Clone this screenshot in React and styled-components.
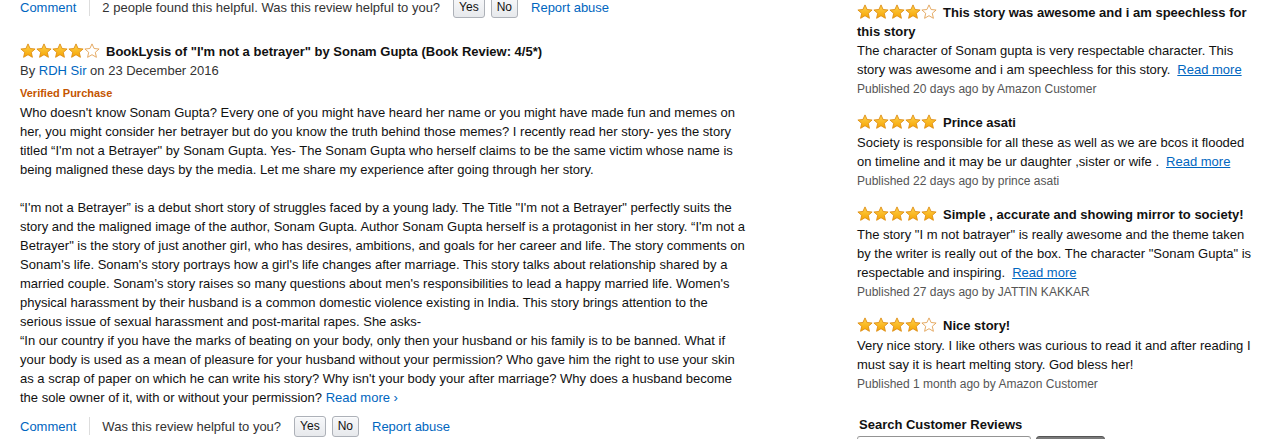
import React from "react";
import styled, { createGlobalStyle } from "styled-components";

const GlobalStyle = createGlobalStyle`
  body {
    margin: 0;
    background: #fff;
    font-family: "Liberation Sans", Arial, sans-serif;
    color: #111;
    font-size: 13px;
    line-height: 19px;
    overflow: hidden;
  }
`;

const STAR = "M8 0.9 L10.1 5.5 L15.1 6 L11.3 9.3 L12.4 14.3 L8 11.7 L3.6 14.3 L4.7 9.3 L0.9 6 L5.9 5.5 Z";

const Star = ({ filled, id }) => (
  <svg width="16" height="16" viewBox="0 0 16 16">
    <defs>
      <linearGradient id={id} x1="0" y1="0" x2="0" y2="1">
        <stop offset="0" stopColor="#ffd34f" />
        <stop offset="1" stopColor="#f5a300" />
      </linearGradient>
    </defs>
    <path
      d={STAR}
      fill={filled ? `url(#${id})` : "#fff"}
      stroke={filled ? "#de8d14" : "#e2a155"}
      strokeWidth="0.9"
      strokeLinejoin="round"
    />
  </svg>
);

let starSeq = 0;
const Stars = ({ count }) => {
  const base = `g${starSeq++}`;
  return (
    <StarBox>
      {[0, 1, 2, 3, 4].map((i) => (
        <Star key={i} filled={i < count} id={`${base}-${i}`} />
      ))}
    </StarBox>
  );
};

const ActionRow = ({ found, top }) => (
  <Actions $top={top}>
    <Link>Comment</Link>
    <Divider />
    <Muted>{found}Was this review helpful to you?</Muted>
    <VoteButton>Yes</VoteButton>
    <VoteButton>No</VoteButton>
    <Link $gap>Report abuse</Link>
  </Actions>
);

const sideReviews = [
  {
    stars: 4,
    title: "This story was awesome and i am speechless for this story",
    body: "The character of Sonam gupta is very respectable character. This story was awesome and i am speechless for this story.",
    more: true,
    by: "Published 20 days ago by Amazon Customer",
  },
  {
    stars: 5,
    title: "Prince asati",
    body: "Society is responsible for all these as well as we are bcos it flooded on timeline and it may be ur daughter ,sister or wife .",
    more: true,
    by: "Published 22 days ago by prince asati",
  },
  {
    stars: 5,
    title: "Simple , accurate and showing mirror to society!",
    body: "The story \"I m not batrayer\" is really awesome and the theme taken by the writer is really out of the box. The character \"Sonam Gupta\" is respectable and inspiring.",
    more: true,
    by: "Published 27 days ago by JATTIN KAKKAR",
  },
  {
    stars: 4,
    title: "Nice story!",
    body: "Very nice story. I like others was curious to read it and after reading I must say it is heart melting story. God bless her!",
    more: false,
    by: "Published 1 month ago by Amazon Customer",
  },
];

export default function App() {
  return (
    <Page>
      <GlobalStyle />
      <Main>
        <ActionRow top found="2 people found this helpful. " />
        <Review>
          <TitleRow>
            <Stars count={4} />
            <Title>BookLysis of "I'm not a betrayer" by Sonam Gupta (Book Review: 4/5*)</Title>
          </TitleRow>
          <Byline>
            By <Link>RDH Sir</Link> on 23 December 2016
          </Byline>
          <Verified>Verified Purchase</Verified>
          <Body>
            Who doesn't know Sonam Gupta? Every one of you might have heard her name or you might have made fun and memes on her, you might consider her betrayer but do you know the truth behind those memes? I recently read her story- yes the story titled “I'm not a Betrayer" by Sonam Gupta. Yes- The Sonam Gupta who herself claims to be the same victim whose name is being maligned these days by the media. Let me share my experience after going through her story.
            <br />
            <br />
            “I'm not a Betrayer” is a debut short story of struggles faced by a young lady. The Title "I'm not a Betrayer" perfectly suits the story and the maligned image of the author, Sonam Gupta. Author Sonam Gupta herself is a protagonist in her story. “I'm not a Betrayer" is the story of just another girl, who has desires, ambitions, and goals for her career and life. The story comments on Sonam's life. Sonam's story portrays how a girl's life changes after marriage. This story talks about relationship shared by a married couple. Sonam's story raises so many questions about men's responsibilities to lead a happy married life. Women's physical harassment by their husband is a common domestic violence existing in India. This story brings attention to the serious issue of sexual harassment and post-marital rapes. She asks-
            <br />
            “In our country if you have the marks of beating on your body, only then your husband or his family is to be banned. What if your body is used as a mean of pleasure for your husband without your permission? Who gave him the right to use your skin as a scrap of paper on which he can write his story? Why isn't your body your after marriage? Why does a husband become the sole owner of it, with or without your permission?{" "}
            <Link>Read more ›</Link>
          </Body>
        </Review>
        <ActionRow found="" />
      </Main>

      <Side>
        {sideReviews.map((r, i) => (
          <SideItem key={i}>
            <SideTitle $tight={i === 0}>
              <Stars count={r.stars} />
              <b>{r.title}</b>
            </SideTitle>
            <SideBody>
              {r.body}
              {r.more && <MoreLink>Read more</MoreLink>}
            </SideBody>
            <Published>{r.by}</Published>
          </SideItem>
        ))}
        <SearchHead>Search Customer Reviews</SearchHead>
        <SearchRow>
          <SearchInput />
          <SearchButton />
        </SearchRow>
      </Side>
    </Page>
  );
}

const Page = styled.div`
  display: flex;
  align-items: flex-start;
  padding-left: 20px;
`;

const Main = styled.div`
  width: 728px;
  flex-shrink: 0;
`;

const Actions = styled.div`
  display: flex;
  align-items: center;
  height: 22px;
  margin-top: ${(p) => (p.$top ? "-4px" : "8px")};
`;

const Link = styled.a`
  color: #0066c0;
  cursor: pointer;
  margin-left: ${(p) => (p.$gap ? "7px" : "0")};
`;

const Divider = styled.span`
  width: 1px;
  height: 18px;
  background: #ddd;
  margin: 0 12px 0 13px;
`;

const Muted = styled.span`
  color: #333;
  margin-right: 13px;
`;

const VoteButton = styled.button`
  height: 21px;
  padding: 0 5px;
  margin-right: 6px;
  font-family: "Liberation Sans", Arial, sans-serif;
  font-size: 12px;
  color: #111;
  background: linear-gradient(#f7f8fa, #e7e9ec);
  border: 1px solid #adb1b8;
  border-radius: 3px;
  box-shadow: 0 1px 0 rgba(255, 255, 255, 0.6) inset;
`;

const Review = styled.div`
  margin-top: 23px;
`;

const TitleRow = styled.div`
  display: flex;
  align-items: center;
  height: 20px;
`;

const StarBox = styled.span`
  display: inline-flex;
  vertical-align: -3px;
  margin-right: 6px;
`;

const Title = styled.span`
  font-weight: bold;
`;

const Byline = styled.div`
  color: #333;
`;

const Verified = styled.div`
  margin-top: 4px;
  color: #c45500;
  font-size: 11px;
  font-weight: bold;
`;

const Body = styled.div``;

const Side = styled.div`
  width: 400px;
  margin-left: 109px;
  padding-top: 3px;
`;

const SideItem = styled.div`
  margin-bottom: 14px;
`;

const SideTitle = styled.div`
  padding-bottom: ${(p) => (p.$tight ? "0" : "1px")};
`;

const SideBody = styled.div``;

const MoreLink = styled.a`
  color: #0066c0;
  text-decoration: underline;
  margin-left: 7px;
`;

const Published = styled.div`
  padding-top: 1px;
  font-size: 12px;
  color: #555;
`;

const SearchHead = styled.div`
  margin-top: 21px;
  padding-left: 2px;
  font-weight: bold;
`;

const SearchRow = styled.div`
  display: flex;
  gap: 5px;
  margin-top: 2px;
`;

const SearchInput = styled.div`
  width: 172px;
  height: 28px;
  border: 1px solid #a6a6a6;
  border-top-color: #949494;
  border-radius: 3px;
`;

const SearchButton = styled.div`
  width: 67px;
  height: 28px;
  border-radius: 3px;
  border: 1px solid #555;
  background: linear-gradient(#7b7b7b, #5e5e5e);
`;
